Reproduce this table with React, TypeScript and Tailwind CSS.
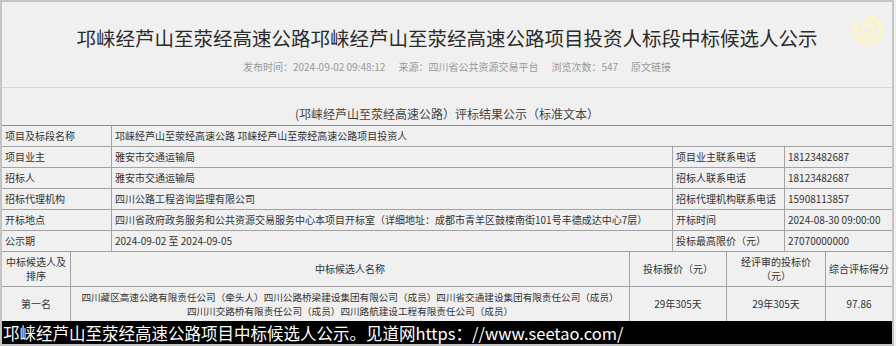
import React from "react";

const F = { fontFamily: '"Noto Sans CJK SC", "Noto Sans", sans-serif' };

function Cell({ w, children, className = "" }: { w?: string; children?: React.ReactNode; className?: string }) {
  return (
    <div className={`border-r border-b border-[#a3a3a3] px-[3px] flex items-center ${w ?? "flex-1"} ${className}`}>
      {children}
    </div>
  );
}

export default function App() {
  const rows: [string, string, string?, string?][] = [
    ["项目业主", "雅安市交通运输局", "项目业主联系电话", "18123482687"],
    ["招标人", "雅安市交通运输局", "招标人联系电话", "18123482687"],
    ["招标代理机构", "四川公路工程咨询监理有限公司", "招标代理机构联系电话", "15908113857"],
    [
      "开标地点",
      "四川省政府政务服务和公共资源交易服务中心本项目开标室（详细地址：成都市青羊区鼓楼南街101号丰德成达中心7层）",
      "开标时间",
      "2024-08-30 09:00:00",
    ],
    ["公示期", "2024-09-02 至 2024-09-05", "投标最高限价（元）", "27070000000"],
  ];
  return (
    <div className="w-[896px] h-[346px] bg-[#f0f0f0] overflow-hidden" style={F}>
      <div className="relative w-[894px] h-[346px] border-t-2 border-l-2 border-r-2 border-b-2 border-[#c4c4c4] flex flex-col text-[#333]">
        <svg className="absolute left-[850px] top-[12px]" width="32" height="32" viewBox="0 0 32 32">
          <path d="M16 3 A13 13 0 1 1 4.5 10" fill="none" stroke="#fcf6c6" strokeWidth="4" strokeLinecap="round" />
          <circle cx="16" cy="16" r="6" fill="none" stroke="#fcf6c6" strokeWidth="3.5" />
        </svg>
        <h1 className="mt-[23px] text-center text-[19.5px] leading-[26px] font-normal text-[#2b2b2b]">
          邛崃经芦山至荥经高速公路邛崃经芦山至荥经高速公路项目投资人标段中标候选人公示
        </h1>
        <div className="mt-[9px] flex justify-center pl-[20px] gap-[13px] text-[10px] leading-[14px] text-[#9a9a9a]">
          <span>发布时间：2024-09-02 09:48:12</span>
          <span>来源：四川省公共资源交易平台</span>
          <span>浏览次数：547</span>
          <span>原文链接</span>
        </div>
        <div className="mt-[13px] h-px bg-[#d6d6d6]" />
        <div className="mt-[18px] text-center text-[12px] leading-[16px] text-[#444]">
          (邛崃经芦山至荥经高速公路）评标结果公示（标准文本）
        </div>
        <div className="mt-[3px] border-t border-[#8c8c8c] text-[10px] leading-[14px] text-[#333]">
          <div className="flex h-[21px]">
            <Cell w="w-[110px]">项目及标段名称</Cell>
            <Cell className="border-r-0">邛崃经芦山至荥经高速公路 邛崃经芦山至荥经高速公路项目投资人</Cell>
          </div>
          {rows.map((r, i) => (
            <div key={i} className={`flex ${i === 4 ? "h-[21px]" : "h-[21px]"}`}>
              <Cell w="w-[110px]">{r[0]}</Cell>
              <Cell w="w-[561px]" className="whitespace-nowrap">{r[1]}</Cell>
              <Cell w="w-[112px]" className="whitespace-nowrap">{r[2]}</Cell>
              <Cell className="border-r-0">{r[3]}</Cell>
            </div>
          ))}
          <div className="flex h-[35px] text-center">
            <Cell w="w-[69px]" className="justify-center">
              中标候选人及
              <br />
              排序
            </Cell>
            <Cell w="w-[559px]" className="justify-center">中标候选人名称</Cell>
            <Cell w="w-[97px]" className="justify-center">投标报价（元）</Cell>
            <Cell w="w-[99px]" className="justify-center">
              经评审的投标价
              <br />
              （元）
            </Cell>
            <Cell className="justify-center border-r-0 whitespace-nowrap">综合评标得分</Cell>
          </div>
          <div className="flex h-[34px] text-center">
            <Cell w="w-[69px]" className="justify-center border-b-0">第一名</Cell>
            <Cell w="w-[559px]" className="justify-center border-b-0 whitespace-nowrap text-[9.6px]">
              四川藏区高速公路有限责任公司（牵头人）四川公路桥梁建设集团有限公司（成员）四川省交通建设集团有限责任公司（成员）
              <br />
              四川川交路桥有限责任公司（成员）四川路航建设工程有限责任公司（成员）
            </Cell>
            <Cell w="w-[97px]" className="justify-center border-b-0">29年305天</Cell>
            <Cell w="w-[99px]" className="justify-center border-b-0">29年305天</Cell>
            <Cell className="justify-center border-r-0 border-b-0">97.86</Cell>
          </div>
        </div>
        <div className="flex-1 min-h-0 flex items-center bg-black text-white text-[16.5px] leading-[20px] pl-[1px] whitespace-nowrap overflow-hidden">
          邛崃经芦山至荥经高速公路项目中标候选人公示。见道网https：//www.seetao.com/
        </div>
      </div>
    </div>
  );
}
